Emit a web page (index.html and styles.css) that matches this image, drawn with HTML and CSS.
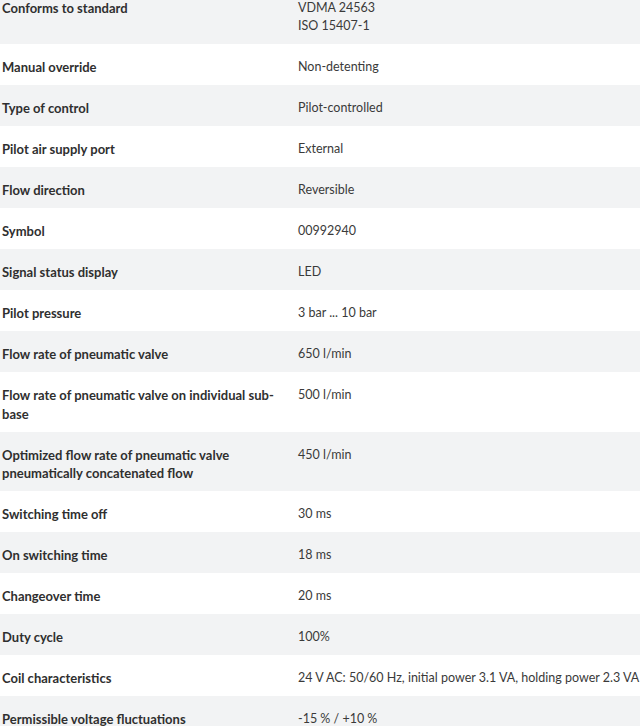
FILE: index.html
```html
<!DOCTYPE html>
<html lang="en">
<head>
<meta charset="utf-8">
<title>Technical data</title>
<link rel="stylesheet" href="styles.css">
</head>
<body>
<div class="specs">
  <div class="row"><div class="label">Conforms to standard</div><div class="value">VDMA 24563<br>ISO 15407-1</div></div>
  <div class="row"><div class="label">Manual override</div><div class="value">Non-detenting</div></div>
  <div class="row"><div class="label">Type of control</div><div class="value">Pilot-controlled</div></div>
  <div class="row"><div class="label">Pilot air supply port</div><div class="value">External</div></div>
  <div class="row"><div class="label">Flow direction</div><div class="value">Reversible</div></div>
  <div class="row"><div class="label">Symbol</div><div class="value">00992940</div></div>
  <div class="row"><div class="label">Signal status display</div><div class="value">LED</div></div>
  <div class="row"><div class="label">Pilot pressure</div><div class="value">3 bar ... 10 bar</div></div>
  <div class="row"><div class="label">Flow rate of pneumatic valve</div><div class="value">650 l/min</div></div>
  <div class="row"><div class="label">Flow rate of pneumatic valve on individual sub-base</div><div class="value">500 l/min</div></div>
  <div class="row"><div class="label">Optimized flow rate of pneumatic valve pneumatically concatenated flow</div><div class="value">450 l/min</div></div>
  <div class="row"><div class="label">Switching time off</div><div class="value">30 ms</div></div>
  <div class="row"><div class="label">On switching time</div><div class="value">18 ms</div></div>
  <div class="row"><div class="label">Changeover time</div><div class="value">20 ms</div></div>
  <div class="row"><div class="label">Duty cycle</div><div class="value">100%</div></div>
  <div class="row"><div class="label">Coil characteristics</div><div class="value">24 V AC: 50/60 Hz, initial power 3.1 VA, holding power 2.3 VA</div></div>
  <div class="row"><div class="label">Permissible voltage fluctuations</div><div class="value">-15 % / +10 %</div></div>
</div>
</body>
</html>
```
FILE: styles.css
```css
html, body {
  margin: 0;
  padding: 0;
  background: #ffffff;
  overflow: hidden;
}
body {
  font-family: Lato, "Open Sans", sans-serif;
  font-size: 13px;
  color: #333333;
}
.specs {
  margin-top: -15.5px;
}
.row {
  display: grid;
  grid-template-columns: 298px 1fr;
  padding: 14px 0 8.5px;
  line-height: 18.5px;
}
.row:nth-child(odd) {
  background: #f2f3f4;
}
.label {
  font-weight: 700;
  color: #2f2f2f;
  padding-left: 2px;
  padding-right: 18px;
}
.value {
  font-size: 12.5px;
  color: #3a3a3a;
  white-space: nowrap;
}
```
